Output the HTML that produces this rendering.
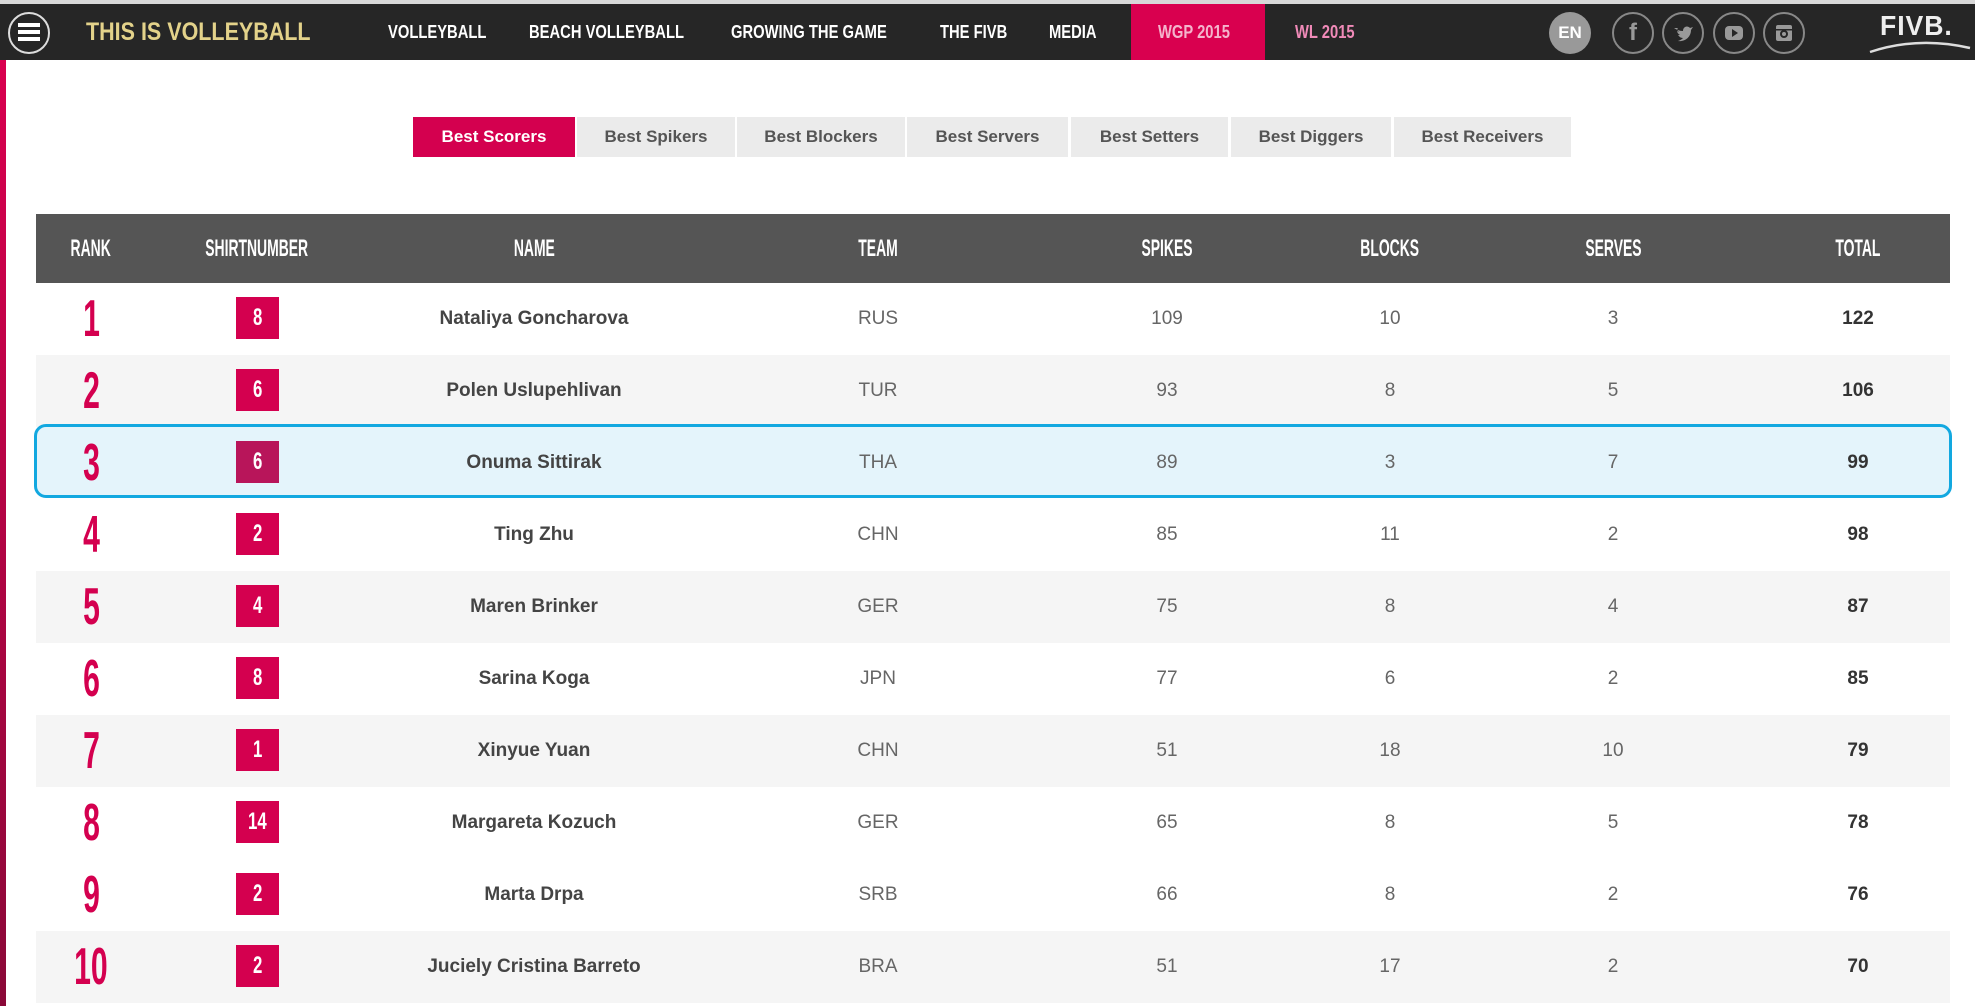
<!DOCTYPE html>
<html><head><meta charset="utf-8"><style>
*{margin:0;padding:0;box-sizing:border-box}
body{width:1975px;height:1006px;background:#fff;position:relative;overflow:hidden;font-family:"Liberation Sans",sans-serif}
.a{position:absolute}
.nav{left:0;top:4px;width:1975px;height:56px;background:#262626}
.topline{left:0;top:0;width:1975px;height:4px;background:#d8d8d8}
.stripe{left:0;top:60px;width:6px;height:946px;background:linear-gradient(#d9004f,#8a0838)}
.ni{top:4px;height:56px;line-height:56px;color:#fff;font-weight:bold;font-size:18px;white-space:nowrap}
.cond{display:inline-block;transform:scaleX(.82);transform-origin:left center}
.circ{width:42px;height:42px;border-radius:50%;border:2px solid #888;top:12px}
.tab{top:117px;height:40px;line-height:40px;text-align:center;background:#ebebeb;color:#555;font-weight:bold;font-size:17px}
.hdr{left:36px;top:214px;width:1914px;height:69px;background:#555}
.hc{top:214px;height:69px;line-height:69px;color:#fff;font-weight:bold;font-size:24px;text-align:center;width:300px;margin-left:-150px}
.hc span{display:inline-block;transform:scaleX(.58)}
.row{left:36px;width:1914px;height:72px}
.c{height:72px;line-height:72px;text-align:center;width:400px;margin-left:-200px;font-size:19px;color:#666}
.rk{color:#d4004f;font-size:52px;font-weight:bold}
.rk span{display:inline-block;transform:scaleX(.58)}
.sb{width:43px;height:42px;background:#d4004f;color:#fff;font-size:24px;line-height:42px;text-align:center;font-weight:bold;margin-left:-21px}
.sb span{display:inline-block;transform:scaleX(.7)}
.nm{font-weight:bold;color:#444}
.tt{font-weight:bold;color:#333}
</style></head><body>
<div class="a topline"></div>
<div class="a nav"></div>
<div class="a stripe"></div>
<div class="a" style="left:8px;top:12px;width:42px;height:42px;border:2px solid #ddd;border-radius:50%"></div>
<div class="a" style="left:18px;top:23px;width:22px;height:4px;background:#fff;box-shadow:0 7px 0 #fff,0 14px 0 #fff"></div>
<div class="a ni" style="left:86px;color:#e3d28a;font-size:25px"><span class="cond" style="transform:scaleX(.86)">THIS IS VOLLEYBALL</span></div>
<div class="a ni" style="left:388px"><span class="cond">VOLLEYBALL</span></div>
<div class="a ni" style="left:529px"><span class="cond">BEACH VOLLEYBALL</span></div>
<div class="a ni" style="left:731px"><span class="cond">GROWING THE GAME</span></div>
<div class="a ni" style="left:940px"><span class="cond">THE FIVB</span></div>
<div class="a ni" style="left:1049px"><span class="cond">MEDIA</span></div>
<div class="a" style="left:1131px;top:4px;width:134px;height:56px;background:#d9004f"></div>
<div class="a ni" style="left:1158px;color:#f4b4cc"><span class="cond">WGP 2015</span></div>
<div class="a ni" style="left:1295px;color:#f08ab8"><span class="cond">WL 2015</span></div>
<div class="a" style="left:1549px;top:12px;width:42px;height:42px;border-radius:50%;background:#999;color:#fff;font-weight:bold;font-size:17px;line-height:42px;text-align:center">EN</div>
<div class="a circ" style="left:1612px;color:#999;font-weight:bold;font-size:24px;line-height:38px;text-align:center">f</div>
<div class="a circ" style="left:1662px"><svg width="38" height="38" viewBox="0 0 38 38"><path d="M10 14c3 2 6 3 9 3c0-4 4-6 7-3l3-1-2 3c0 7-6 12-13 11c3-1 4-2 5-3c-3 0-4-2-5-3h2c-2-1-3-3-3-4l2 1c-2-2-2-3-1-4z" fill="#999"/></svg></div>
<div class="a circ" style="left:1713px"><svg width="38" height="38" viewBox="0 0 38 38"><rect x="10" y="12" width="18" height="14" rx="4" fill="#999"/><path d="M17 15l6 4l-6 4z" fill="#262626"/></svg></div>
<div class="a circ" style="left:1763px"><svg width="38" height="38" viewBox="0 0 38 38"><rect x="11" y="11" width="16" height="16" rx="2" fill="#999"/><circle cx="19" cy="20" r="4" fill="#262626"/><circle cx="19" cy="20" r="2" fill="#999"/><rect x="11" y="15" width="16" height="1.5" fill="#262626"/></svg></div>
<div class="a" style="left:1880px;top:10px;color:#eee;font-weight:bold;font-size:28px;letter-spacing:1px"><span class="cond" style="transform:scaleX(.95)">FIVB.</span></div>
<svg class="a" style="left:1868px;top:38px" width="104" height="16"><path d="M2 14Q50 -2 102 10" stroke="#ddd" stroke-width="2.5" fill="none"/></svg>

<div class="a tab" style="left:413px;width:162px;background:#d4004f;color:#fff">Best Scorers</div>
<div class="a tab" style="left:577px;width:158px">Best Spikers</div>
<div class="a tab" style="left:737px;width:168px">Best Blockers</div>
<div class="a tab" style="left:907px;width:161px">Best Servers</div>
<div class="a tab" style="left:1071px;width:157px">Best Setters</div>
<div class="a tab" style="left:1231px;width:160px">Best Diggers</div>
<div class="a tab" style="left:1394px;width:177px">Best Receivers</div>

<div class="a hdr"></div>
<div class="a hc" style="left:91px"><span>RANK</span></div>
<div class="a hc" style="left:257px"><span>SHIRTNUMBER</span></div>
<div class="a hc" style="left:534px"><span>NAME</span></div>
<div class="a hc" style="left:878px"><span>TEAM</span></div>
<div class="a hc" style="left:1167px"><span>SPIKES</span></div>
<div class="a hc" style="left:1390px"><span>BLOCKS</span></div>
<div class="a hc" style="left:1613px"><span>SERVES</span></div>
<div class="a hc" style="left:1858px"><span>TOTAL</span></div>

<div class="a row" style="top:283px;background:#fff"></div>
<div class="a row" style="top:355px;background:#f5f5f5"></div>
<div class="a row" style="top:427px;background:#fff"></div>
<div class="a row" style="top:499px;background:#fff"></div>
<div class="a row" style="top:571px;background:#f5f5f5"></div>
<div class="a row" style="top:643px;background:#fff"></div>
<div class="a row" style="top:715px;background:#f5f5f5"></div>
<div class="a row" style="top:787px;background:#fff"></div>
<div class="a row" style="top:859px;background:#fff"></div>
<div class="a row" style="top:931px;background:#f5f5f5"></div>
<div class="a" style="left:34px;top:424px;width:1918px;height:74px;border:3px solid #12a8e0;border-radius:12px;background:#e4f4fb"></div>

<div id="rows"></div>
<script>
var d=[["1","8","Nataliya Goncharova","RUS","109","10","3","122"],["2","6","Polen Uslupehlivan","TUR","93","8","5","106"],["3","6","Onuma Sittirak","THA","89","3","7","99"],["4","2","Ting Zhu","CHN","85","11","2","98"],["5","4","Maren Brinker","GER","75","8","4","87"],["6","8","Sarina Koga","JPN","77","6","2","85"],["7","1","Xinyue Yuan","CHN","51","18","10","79"],["8","14","Margareta Kozuch","GER","65","8","5","78"],["9","2","Marta Drpa","SRB","66","8","2","76"],["10","2","Juciely Cristina Barreto","BRA","51","17","2","70"]];
var xs=[91,257,534,878,1167,1390,1613,1858],h="";
d.forEach(function(r,i){var t=283+i*72;
h+='<div class="a c rk" style="left:91px;top:'+t+'px"><span>'+r[0]+'</span></div>';
h+='<div class="a sb" style="left:257px;top:'+(t+14)+'px;'+(i==2?'background:#b8155a':'')+'"><span>'+r[1]+'</span></div>';
h+='<div class="a c nm" style="left:534px;top:'+t+'px">'+r[2]+'</div>';
for(var k=3;k<8;k++)h+='<div class="a c'+(k==7?' tt':'')+'" style="left:'+xs[k]+'px;top:'+t+'px">'+r[k]+'</div>';});
document.getElementById("rows").innerHTML=h;
</script>
</body></html>
